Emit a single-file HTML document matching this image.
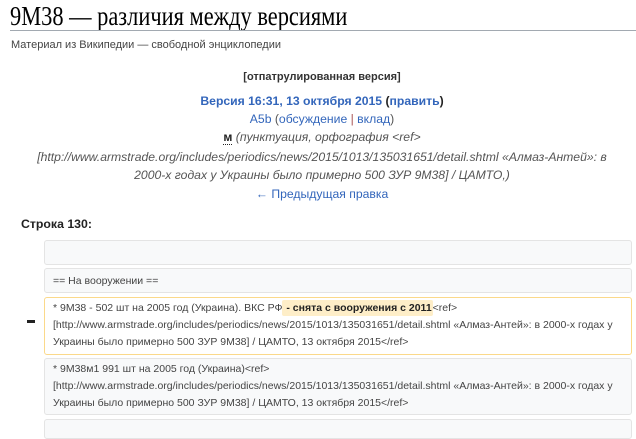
<!DOCTYPE html>
<html><head><meta charset="utf-8"><style>
body{margin:0;width:636px;height:424px;overflow:hidden;background:#fff;font-family:"Liberation Sans",sans-serif;position:relative;color:#222}
.a{position:absolute;white-space:nowrap}
.c{position:absolute;left:0;width:644px;text-align:center;white-space:nowrap;font-size:12.2px;line-height:14px}
.box{position:absolute;left:44px;width:588px;background:#f8f9fa;border:1px solid #e4e4e4;border-radius:3px;font-size:10.5px;color:#444;line-height:17px;padding:3px 0 0 8px;box-sizing:border-box}
</style></head><body>
<div class="a" style="left:10px;top:1px;font-family:'Liberation Serif',serif;font-size:27px;color:#000;transform:scaleX(0.83);transform-origin:0 0">9М38 — различия между версиями</div>
<div class="a" style="left:10px;top:30px;width:626px;height:1px;background:#a2a9b1"></div>
<div class="a" style="left:11px;top:39px;font-size:11px;color:#444">Материал из Википедии — свободной энциклопедии</div>
<div class="c" style="top:70px;font-weight:bold;font-size:11px;color:#333">[отпатрулированная версия]</div>
<div class="c" style="top:94px;font-weight:bold;color:#3366bb">Версия 16:31, 13 октября 2015 <span style="color:#222">(</span>править<span style="color:#222">)</span></div>
<div class="c" style="top:112px;color:#3366bb">A5b <span style="color:#555">(</span>обсуждение <span style="color:#a55">|</span> вклад<span style="color:#555">)</span></div>
<div class="c" style="top:130px;color:#555;font-style:italic"><b style="font-style:normal;color:#222;border-bottom:1px dotted #222">м</b> (пунктуация, орфография &lt;ref&gt;</div>
<div class="c" style="top:150px;color:#555;font-style:italic">[http://www.armstrade.org/includes/periodics/news/2015/1013/135031651/detail.shtml «Алмаз-Антей»: в</div>
<div class="c" style="top:168px;color:#555;font-style:italic">2000-х годах у Украины было примерно 500 ЗУР 9М38] / ЦАМТО,)</div>
<div class="c" style="top:187px;color:#3366bb">← Предыдущая правка</div>
<div class="a" style="left:21px;top:217px;font-weight:bold;font-size:12.3px;color:#222">Строка 130:</div>
<div class="box" style="top:240px;height:25px"></div>
<div class="box" style="top:268px;height:25px;padding-top:4px">== На вооружении ==</div>
<div class="a" style="left:27px;top:320px;width:8px;height:3px;background:#222"></div>
<div class="box" style="top:297px;height:58px;background:#fff;border-color:#fbd98a;padding-top:2px">* 9М38 - 502 шт на 2005 год (Украина). ВКС РФ<span style="background:#feeec8;font-weight:bold;color:#222;padding:2px 1px;border-radius:2px"> - снята с вооружения с 2011</span>&lt;ref&gt;<br>[http://www.armstrade.org/includes/periodics/news/2015/1013/135031651/detail.shtml «Алмаз-Антей»: в 2000-х годах у<br>Украины было примерно 500 ЗУР 9М38] / ЦАМТО, 13 октября 2015&lt;/ref&gt;</div>
<div class="box" style="top:358px;height:57px;padding-top:2px">* 9М38м1 991 шт на 2005 год (Украина)&lt;ref&gt;<br>[http://www.armstrade.org/includes/periodics/news/2015/1013/135031651/detail.shtml «Алмаз-Антей»: в 2000-х годах у<br>Украины было примерно 500 ЗУР 9М38] / ЦАМТО, 13 октября 2015&lt;/ref&gt;</div>
<div class="box" style="top:419px;height:20px"></div>
</body></html>
